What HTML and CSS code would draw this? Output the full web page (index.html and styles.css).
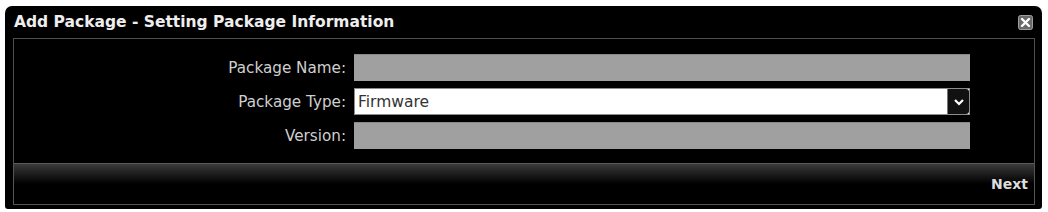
FILE: index.html
```html
<!DOCTYPE html>
<html>
<head>
<meta charset="utf-8">
<link rel="stylesheet" href="styles.css">
</head>
<body>
<div class="dialog">
  <div class="titlebar">
    <span class="title">Add Package - Setting Package Information</span>
    <span class="close">
      <svg width="15" height="15" viewBox="0 0 15 15">
        <rect x="0.5" y="0.5" width="14" height="14" rx="2" fill="#6a6a6a" stroke="#a0a0a0"/>
        <path d="M4 4 L11 11 M11 4 L4 11" stroke="#fff" stroke-width="2.4" stroke-linecap="round"/>
      </svg>
    </span>
  </div>
  <div class="panel">
    <div class="form">
      <label class="label">Package Name:</label>
      <div class="input"></div>
      <label class="label">Package Type:</label>
      <div class="select">
        <span class="select-text">Firmware</span>
        <span class="select-btn">
          <svg width="12" height="8" viewBox="0 0 12 8">
            <path d="M2 2 L6 6 L10 2" fill="none" stroke="#fff" stroke-width="2.2"/>
          </svg>
        </span>
      </div>
      <label class="label">Version:</label>
      <div class="input"></div>
    </div>
  </div>
  <div class="footer">
    <span class="next">Next</span>
  </div>
</div>
</body>
</html>
```

FILE: styles.css
```css
html, body {
  margin: 0;
  padding: 0;
  background: #fff;
}
body {
  font-family: "DejaVu Sans", Verdana, sans-serif;
}
.dialog {
  margin: 6px 0 0 5px;
  width: 1037px;
  height: 203px;
  background: #000;
  border-radius: 7px 7px 3px 3px;
  box-sizing: border-box;
  padding: 0 7px 4px 8px;
  display: flex;
  flex-direction: column;
}
.titlebar {
  height: 32px;
  display: flex;
  align-items: center;
  justify-content: space-between;
  padding: 0 2px 0 1px;
}
.title {
  color: #eeeeee;
  font-weight: bold;
  font-size: 15.5px;
  letter-spacing: 0;
}
.close {
  display: flex;
  width: 15px;
  height: 15px;
  margin-top: 1px;
}
.panel {
  border: 1px solid #4e4e4e;
  border-bottom-color: #5a5a5a;
  height: 126px;
  box-sizing: border-box;
  padding: 15px 0 0 0;
}
.form {
  display: grid;
  grid-template-columns: 332px 616px;
  grid-auto-rows: 27px;
  column-gap: 8px;
  row-gap: 7px;
}
.label {
  color: #cfcfcf;
  font-size: 15.2px;
  text-align: right;
  align-self: center;
}
.input {
  background: #a0a0a0;
  border-top: 1px solid #888;
}
.select {
  background: #fff;
  border: 1px solid #8c8c8c;
  display: flex;
  align-items: center;
  justify-content: space-between;
  box-sizing: border-box;
}
.select-text {
  color: #333;
  font-size: 15.5px;
  padding-left: 3px;
}
.select-btn {
  width: 21px;
  height: 100%;
  background: #111;
  border-left: 1px solid #777;
  border-radius: 0 3px 3px 0;
  display: flex;
  align-items: center;
  justify-content: center;
}
.footer {
  flex: 1;
  border: 1px solid #555;
  border-top: none;
  background: linear-gradient(to bottom, #3a3a3a 0px, #222 8px, #000 20px, #000 100%);
  display: flex;
  align-items: center;
  justify-content: flex-end;
  padding-right: 6px;
}
.next {
  color: #dcdcdc;
  font-weight: bold;
  font-size: 14px;
}
```
